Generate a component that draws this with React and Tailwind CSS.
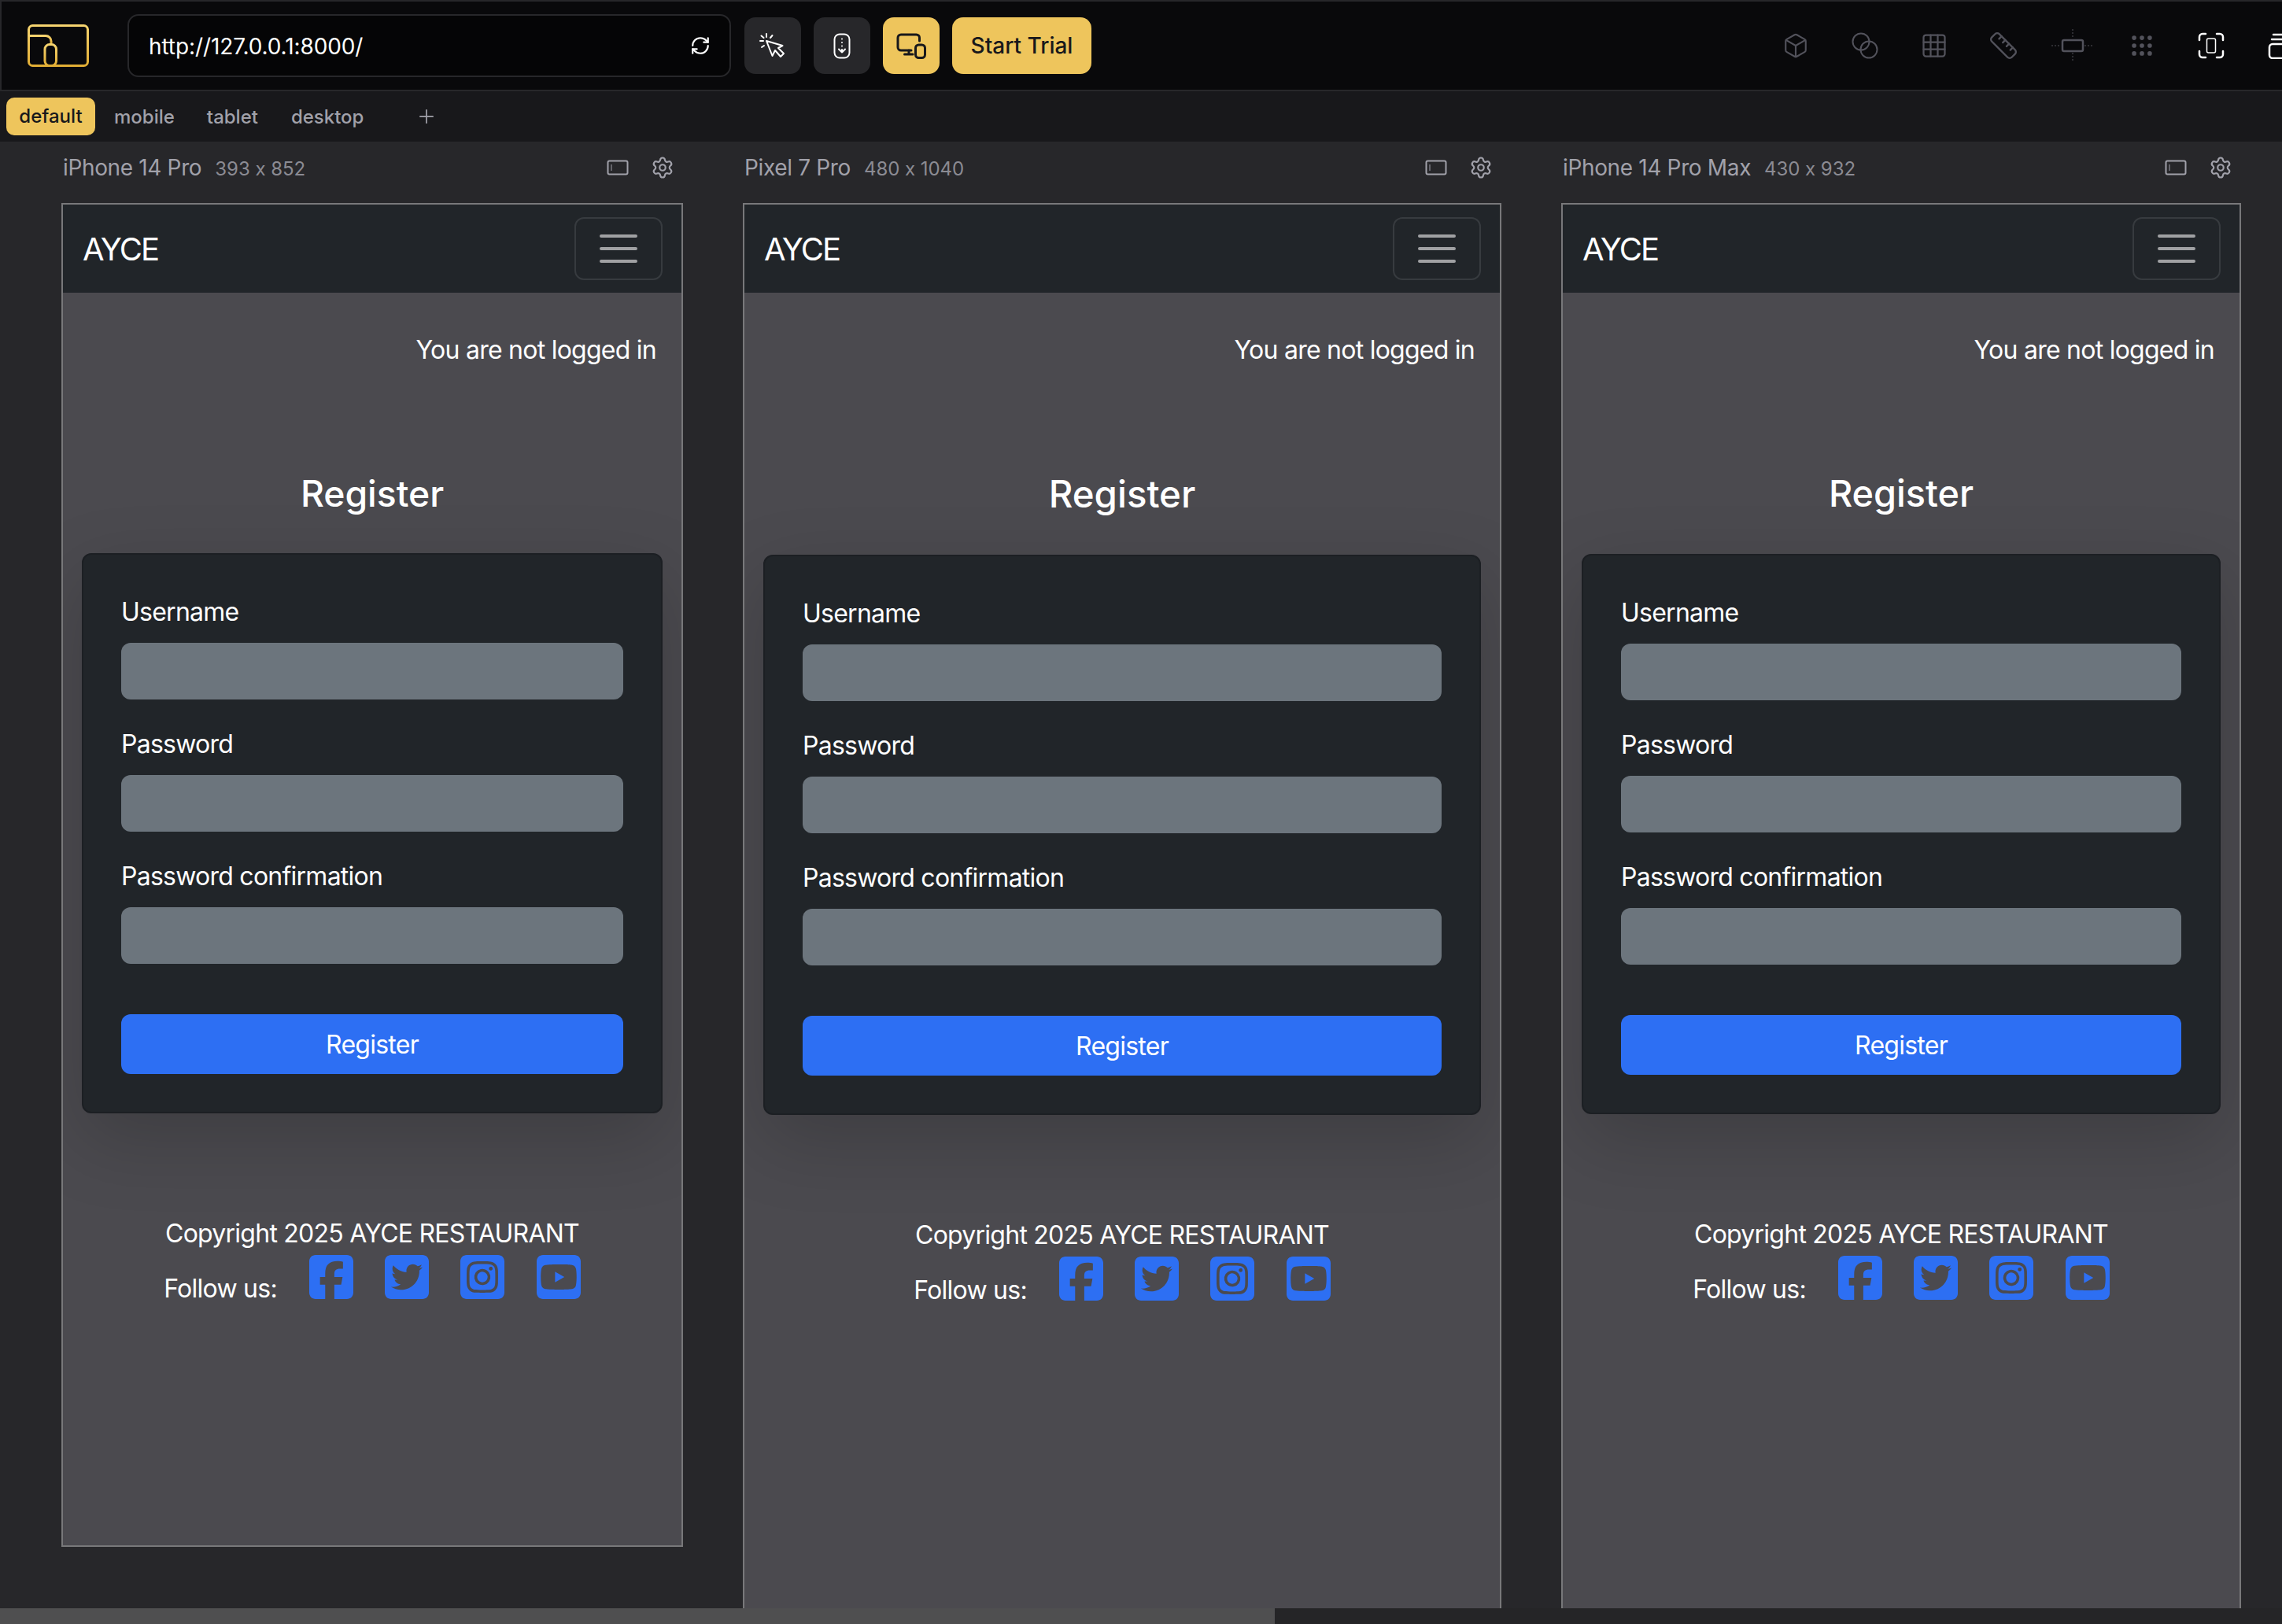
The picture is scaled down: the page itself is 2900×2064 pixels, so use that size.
import React from 'react';
import { Box, Grid3x3, Grip, Plus, RefreshCw, Ruler, Settings } from 'lucide-react';
import { FaSquareFacebook, FaSquareInstagram, FaSquareTwitter, FaSquareYoutube } from 'react-icons/fa6';

const devices = [
  {
    name: 'iPhone 14 Pro',
    size: '393 x 852',
    column: 'w-[790px]',
    frame: 'h-[1708px]',
    heading: 'text-[46.3px] h-[56px] leading-[56px]',
  },
  {
    name: 'Pixel 7 Pro',
    size: '480 x 1040',
    column: 'w-[964px]',
    frame: 'h-[2084px]',
    heading: 'text-[47.4px] h-[58px] leading-[58px]',
  },
  {
    name: 'iPhone 14 Pro Max',
    size: '430 x 932',
    column: 'w-[864px]',
    frame: 'h-[1868px]',
    heading: 'text-[46.8px] h-[57px] leading-[57px]',
  },
];

const LogoIcon = () => (
  <svg width="78" height="54" viewBox="0 0 78 54" fill="none" className="shrink-0">
    <defs>
      <linearGradient id="logoGold" x1="0" y1="0" x2="0" y2="1">
        <stop offset="0" stopColor="#f5d36f" />
        <stop offset="1" stopColor="#e2ae35" />
      </linearGradient>
    </defs>
    <g stroke="url(#logoGold)" strokeWidth="3">
      <rect x="1.5" y="1.5" width="75" height="51" rx="5" />
      <path d="M1.5 14.5H23a7 7 0 0 1 7 7v3" />
      <rect x="22" y="25.5" width="14.5" height="27" rx="6" />
    </g>
  </svg>
);

const ClickCursorIcon = () => (
  <svg width="34" height="32" viewBox="0 0 34 32" fill="none" stroke="#fff" strokeWidth="2" strokeLinecap="round" strokeLinejoin="round">
    <path d="M9 10 16.5 29 20 22l7 8 4-4-7-7 5.5-3Z" />
    <path d="M9 1v4M16.5 3 14 6M1 10h4M3 18l3-2M2.5 3.5 5.5 6" />
  </svg>
);

const ScrollPhoneIcon = () => (
  <svg width="22" height="33" viewBox="0 0 22 33" fill="none" stroke="#fff" strokeWidth="2" strokeLinecap="round" strokeLinejoin="round">
    <rect x="1.5" y="1.5" width="19" height="30" rx="6.5" />
    <path d="M11 7.5v.1M11 12v.1M11 16.5v.1M11 21v3.5M7 20.5l4 4 4-4" />
  </svg>
);

const ResponsiveIcon = () => (
  <svg width="38" height="33" viewBox="0 0 38 33" fill="none" stroke="#18181b" strokeWidth="3" strokeLinecap="round" strokeLinejoin="round">
    <path d="M29.5 10V6a4 4 0 0 0-4-4H6a4 4 0 0 0-4 4v12a4 4 0 0 0 4 4h13" />
    <path d="M16 22v5M10.5 27h10.5" />
    <rect x="24.5" y="15" width="12" height="16.5" rx="4" />
  </svg>
);

const CirclesIcon = () => (
  <svg width="34" height="34" viewBox="0 0 34 34" fill="none" stroke="#52525b" strokeWidth="2">
    <circle cx="12" cy="12" r="10.5" />
    <circle cx="22" cy="22" r="10.5" />
  </svg>
);

const CenterIcon = () => (
  <svg width="54" height="42" viewBox="0 0 54 42" fill="none" stroke="#52525b">
    <rect x="14" y="14" width="26" height="14" rx="2" strokeWidth="2.5" />
    <path d="M0 21h12M42 21h12M27 0v12M27 30v12" strokeWidth="1" strokeDasharray="2 2" />
  </svg>
);

const FocusIcon = () => (
  <svg width="34" height="34" viewBox="0 0 34 34" fill="none" stroke="#fff" strokeLinecap="round">
    <path d="M2 10V6a4 4 0 0 1 4-4h4M24 2h4a4 4 0 0 1 4 4v4M32 24v4a4 4 0 0 1-4 4h-4M10 32H6a4 4 0 0 1-4-4v-4" strokeWidth="2.5" />
    <rect x="11.5" y="8" width="11" height="18" rx="2" strokeWidth="1.5" />
  </svg>
);

const StackIcon = () => (
  <svg width="32" height="33" viewBox="0 0 32 33" fill="none" stroke="#fff" strokeWidth="2.5" strokeLinecap="round">
    <path d="M7 2h18M5 8h22" />
    <rect x="2" y="14" width="28" height="18" rx="4" />
  </svg>
);

const FrameIcon = () => (
  <svg width="28" height="20" viewBox="0 0 28 20" fill="none" stroke="#a1a1aa">
    <rect x="1.5" y="1.5" width="25" height="17" rx="2" strokeWidth="2" />
    <path d="M6 6v8" strokeWidth="1" />
  </svg>
);

const toolIcons = [
  <Box key="box" size={34} strokeWidth={1.5} color="#52525b" />,
  <CirclesIcon key="circles" />,
  <Grid3x3 key="grid" size={36} strokeWidth={1.5} color="#52525b" />,
  <Ruler key="ruler" size={38} strokeWidth={1.5} color="#52525b" />,
  <CenterIcon key="center" />,
  <Grip key="grip" size={34} strokeWidth={2} color="#52525b" />,
  <FocusIcon key="focus" />,
  <StackIcon key="stack" />,
];

const Toolbar = () => (
  <div className="h-[116px] shrink-0 flex items-center overflow-hidden bg-[#09090b] border-t-2 border-l-2 border-b-2 border-[#27272a]">
    <div className="ml-[33px] shrink-0 flex">
      <LogoIcon />
    </div>
    <div className="ml-[49px] w-[767px] h-[80px] shrink-0 flex items-center justify-between pl-[25px] pr-[24px] bg-[#050506] border-2 border-[#27272a] rounded-[14px]">
      <span className="pt-[2px] text-[28px] tracking-[-0.1px] text-white">http://127.0.0.1:8000/</span>
      <RefreshCw size={26} strokeWidth={2} color="#fff" />
    </div>
    <div className="ml-[17px] shrink-0 flex items-center gap-4">
      <button className="w-[72px] h-[72px] flex items-center justify-center rounded-[14px] bg-[#27272a]">
        <ClickCursorIcon />
      </button>
      <button className="w-[72px] h-[72px] flex items-center justify-center rounded-[14px] bg-[#27272a]">
        <ScrollPhoneIcon />
      </button>
      <button className="w-[72px] h-[72px] flex items-center justify-center rounded-[14px] bg-[#eec55c]">
        <ResponsiveIcon />
      </button>
      <button className="w-[177px] h-[72px] flex items-center justify-center rounded-[14px] bg-[#eec55c] text-[28px] font-medium text-[#18181b]">
        Start Trial
      </button>
    </div>
    <div className="ml-[851px] shrink-0 flex items-center">
      {toolIcons.map((icon, index) => (
        <div key={index} className="w-[88px] shrink-0 flex items-center justify-center">
          {icon}
        </div>
      ))}
    </div>
  </div>
);

const TabBar = () => (
  <div className="h-[64px] shrink-0 flex items-center pl-2 bg-[#18181b] text-[24px] font-medium text-[#a1a1aa]">
    <div className="w-[113px] h-[48px] flex items-center justify-center rounded-[10px] bg-[#eec55c] text-[#18181b]">default</div>
    <span className="ml-6 pt-px">mobile</span>
    <span className="ml-[41px] pt-px">tablet</span>
    <span className="ml-[42px] pt-px">desktop</span>
    <Plus size={28} strokeWidth={1.5} className="ml-[66px]" />
  </div>
);

const Field = ({ label }) => (
  <div className="mb-8">
    <label className="block h-[48px] leading-[50px] mb-4 text-[32px] text-white">{label}</label>
    <div className="h-[72px] rounded-[12px] bg-[#6c757d]" />
  </div>
);

const DevicePage = ({ heading }) => (
  <div className="h-full flex flex-col bg-[#4b4a4f] text-white text-[32px] leading-[48px] tracking-[-0.75px]">
    {/* Navbar */}
    <div className="h-[112px] shrink-0 flex items-center justify-between pl-[25px] pr-[24px] bg-[#212529]">
      <span className="pt-[2px] text-[40px] tracking-[-1.9px]">AYCE</span>
      <div className="w-[112px] h-[80px] flex flex-col items-center justify-center gap-3 rounded-[12px] border-2 border-[#373b3f]">
        <div className="w-[48px] h-1 rounded-full bg-[#a0a1a3]" />
        <div className="w-[48px] h-1 rounded-full bg-[#a0a1a3]" />
        <div className="w-[48px] h-1 rounded-full bg-[#a0a1a3]" />
      </div>
    </div>

    <p className="mt-[49px] pr-8 text-right">You are not logged in</p>

    <h3 className={`mt-[130px] mb-12 text-center font-medium tracking-normal ${heading}`}>Register</h3>

    {/* Register card */}
    <div className="mx-6 px-12 pt-12 pb-12 rounded-[12px] bg-[#212529] border-2 border-[#1c1f23] shadow-[0_32px_96px_rgba(0,0,0,0.175)]">
      <Field label="Username" />
      <Field label="Password" />
      <Field label="Password confirmation" />
      <button className="mt-8 w-full h-[76px] pt-[2px] rounded-[12px] bg-[#2d6ff3] text-white">Register</button>
    </div>

    {/* Footer */}
    <div className="mt-[129px] flex flex-col items-center">
      <p>Copyright 2025 AYCE RESTAURANT</p>
      <div className="mt-[3px] flex items-start">
        <span className="mt-[19px] mr-[41px]">Follow us:</span>
        <div className="flex gap-x-[40.3px] text-[#2d6ff3]">
          <FaSquareFacebook size={64} className="w-[56px] h-[64px] -my-1" />
          <FaSquareTwitter size={64} className="w-[56px] h-[64px] -my-1" />
          <FaSquareInstagram size={64} className="w-[56px] h-[64px] -my-1" />
          <FaSquareYoutube size={64} className="w-[56px] h-[64px] -my-1" />
        </div>
      </div>
    </div>
  </div>
);

const DeviceColumn = ({ device }) => (
  <div className={`shrink-0 ${device.column}`}>
    <div className="h-[66px] mb-3 flex items-center justify-between pl-[2px] pr-[11px]">
      <div className="flex items-baseline gap-[17px] [font-feature-settings:'calt'_0]">
        <span className="text-[28px] tracking-[-0.35px] text-[#a1a1aa]">{device.name}</span>
        <span className="text-[24px] tracking-[-0.05px] text-[#8b8b93]">{device.size}</span>
      </div>
      <div className="flex items-center gap-[28px]">
        <FrameIcon />
        <Settings size={30} strokeWidth={1.75} color="#a1a1aa" />
      </div>
    </div>
    <div className={`border-2 border-[#78787a] overflow-hidden ${device.frame}`}>
      <DevicePage heading={device.heading} />
    </div>
  </div>
);

const App = () => (
  <div className="w-[2900px] h-[2064px] flex flex-col overflow-hidden bg-[#27272a] font-['Inter',sans-serif]">
    <Toolbar />
    <TabBar />
    <div className="flex-1 min-h-0 flex gap-x-[76px] pl-[78px] overflow-hidden">
      {devices.map((device) => (
        <DeviceColumn key={device.name} device={device} />
      ))}
    </div>
    {/* Scrollbar */}
    <div className="h-[20px] shrink-0 bg-[#252527]">
      <div className="w-[1620px] h-full bg-[#4f4f50]" />
    </div>
  </div>
);

export default App;
